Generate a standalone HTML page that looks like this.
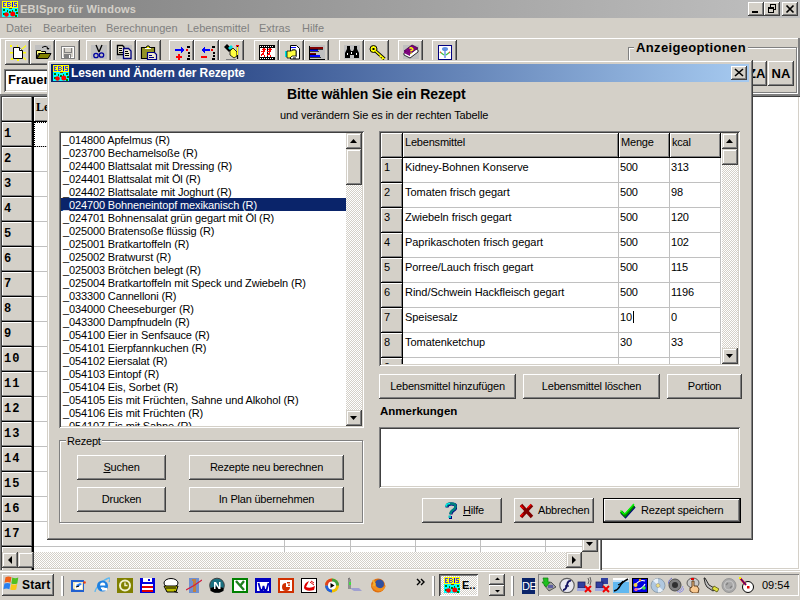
<!DOCTYPE html><html><head><meta charset="utf-8"><style>
*{margin:0;padding:0;box-sizing:border-box}
html,body{width:800px;height:600px;overflow:hidden;background:#D4D0C8;font-family:"Liberation Sans",sans-serif;font-size:11px;color:#000;letter-spacing:-0.2px}
div{position:absolute}
.t{white-space:nowrap;line-height:13px}
.rz{background:#D4D0C8;box-shadow:inset -1px -1px #404040,inset 1px 1px #fff,inset -2px -2px #808080}
.sb{background:#D4D0C8;box-shadow:inset -1px -1px #404040,inset 1px 1px #D4D0C8,inset -2px -2px #808080,inset 2px 2px #fff}
.sk{background:#fff;box-shadow:inset 1px 1px #808080,inset -1px -1px #fff,inset 2px 2px #404040,inset -2px -2px #D4D0C8}
.dt{background:conic-gradient(#fff 25%,#D4D0C8 0 50%,#fff 0 75%,#D4D0C8 0) 0 0/2px 2px}
.hc{background:#D4D0C8;box-shadow:inset -1px -1px #000,inset 1px 1px #fff,inset -2px -2px #808080}
.ct{text-align:center}
.rhc{background:#D4D0C8;box-shadow:inset 0 -1px #000,inset -2px 0 #000,inset -3px -2px #808080,inset 1px 1px #fff}
.mono{font-family:"Liberation Mono",monospace;font-weight:bold;font-size:12px;letter-spacing:1px}
</style></head><body>
<div style="left:0;top:0;width:800px;height:18px;background:linear-gradient(to right,#808080,#C0C0C0)"></div>
<svg style="position:absolute;left:2px;top:1px" width="16" height="16" viewBox="0 0 16 16" ><rect x="0" y="0" width="16" height="16" fill="#00FFFF"/><rect x="0" y="0" width="16" height="7" fill="#FFFF00"/>
<g fill="#4848D8"><rect x="1" y="1" width="1" height="5"/><rect x="1" y="1" width="3" height="1"/><rect x="1" y="3" width="2" height="1"/><rect x="1" y="5" width="3" height="1"/>
<rect x="5" y="1" width="1" height="5"/><rect x="5" y="1" width="3" height="1"/><rect x="5" y="3" width="3" height="1"/><rect x="5" y="5" width="3" height="1"/><rect x="8" y="2" width="1" height="1"/><rect x="8" y="4" width="1" height="1"/>
<rect x="12" y="1" width="3" height="1"/><rect x="12" y="2" width="1" height="1"/><rect x="12" y="3" width="3" height="1"/><rect x="14" y="4" width="1" height="1"/><rect x="12" y="5" width="3" height="1"/></g><rect x="10" y="1" width="1" height="5" fill="#0000FF"/>
<rect x="7" y="7" width="3" height="1" fill="#804000"/>
<g fill="#008000"><rect x="1" y="8" width="2" height="2"/><rect x="5" y="9" width="1" height="2"/><rect x="7" y="10" width="2" height="2"/><rect x="10" y="9" width="1" height="2"/><rect x="13" y="8" width="2" height="2"/><rect x="1" y="12" width="2" height="2"/><rect x="14" y="11" width="2" height="2"/><rect x="13" y="14" width="2" height="2"/></g>
<circle cx="4.5" cy="13.5" r="2.3" fill="#FF0000"/><circle cx="10.8" cy="13" r="2.5" fill="#FF0000"/></svg>
<div class="t" style="left:20px;top:3px;font-weight:bold;color:#D4D0C8;letter-spacing:0.2px">EBISpro für Windows</div>
<div class="rz" style="left:748px;top:2px;width:16px;height:14px"></div>
<div class="rz" style="left:764px;top:2px;width:16px;height:14px"></div>
<div class="rz" style="left:782px;top:2px;width:16px;height:14px"></div>
<div style="left:752px;top:11px;width:6px;height:2px;background:#000"></div>
<svg style="position:absolute;left:764px;top:2px" width="16" height="14" shape-rendering="crispEdges"><path d="M6 2h6v1h-6z M6 3h1v2h-1z M11 3h1v5h-1z M10 7h1v1h-1z M4 5h6v2h-6z M4 7h1v4h-1z M9 7h1v4h-1z M4 10h6v1h-6z" fill="#000"/></svg>
<svg style="position:absolute;left:782px;top:2px" width="16" height="14"><path d="M4.5 3.5l7 7M11.5 3.5l-7 7" stroke="#000" stroke-width="1.7"/></svg>
<div class="t" style="left:6px;top:22px;color:#808080;letter-spacing:0">Datei</div>
<div class="t" style="left:43px;top:22px;color:#808080;letter-spacing:0">Bearbeiten</div>
<div class="t" style="left:106px;top:22px;color:#808080;letter-spacing:0">Berechnungen</div>
<div class="t" style="left:187px;top:22px;color:#808080;letter-spacing:0">Lebensmittel</div>
<div class="t" style="left:259px;top:22px;color:#808080;letter-spacing:0">Extras</div>
<div class="t" style="left:302px;top:22px;color:#808080;letter-spacing:0">Hilfe</div>
<div style="left:0;top:38px;width:800px;height:1px;background:#fff"></div>
<div style="left:0;top:38px;width:1px;height:56px;background:#fff"></div>
<div class="rz" style="left:5px;top:40px;width:25px;height:25px"></div>
<div class="rz" style="left:30px;top:40px;width:25px;height:25px"></div>
<div class="rz" style="left:55px;top:40px;width:25px;height:25px"></div>
<div class="rz" style="left:86px;top:40px;width:25px;height:25px"></div>
<div class="rz" style="left:111px;top:40px;width:25px;height:25px"></div>
<div class="rz" style="left:136px;top:40px;width:25px;height:25px"></div>
<div class="rz" style="left:169px;top:40px;width:25px;height:25px"></div>
<div class="rz" style="left:194px;top:40px;width:25px;height:25px"></div>
<div class="rz" style="left:219px;top:40px;width:25px;height:25px"></div>
<div class="rz" style="left:254px;top:40px;width:25px;height:25px"></div>
<div class="rz" style="left:279px;top:40px;width:25px;height:25px"></div>
<div class="rz" style="left:304px;top:40px;width:25px;height:25px"></div>
<div class="rz" style="left:339px;top:40px;width:25px;height:25px"></div>
<div class="rz" style="left:364px;top:40px;width:25px;height:25px"></div>
<div class="rz" style="left:398px;top:40px;width:25px;height:25px"></div>
<div class="rz" style="left:432px;top:40px;width:25px;height:25px"></div>
<svg style="position:absolute;left:5px;top:40px" width="25" height="25" viewBox="0 0 25 25" ><g fill="#FFFF00"><rect x="5" y="5" width="2" height="2"/><rect x="12" y="5" width="1" height="2"/><path d="M16 9l5-4v1.5l-4 3z"/><rect x="5" y="12" width="3" height="1.5"/><rect x="18" y="12" width="3" height="1.5"/><rect x="6" y="18" width="2" height="2"/><rect x="12" y="19" width="2" height="2"/><path d="M18 18l3 2.5v-1.5l-2-2z"/></g>
<path d="M8.5 7.5h6l3 3v8h-9z" fill="#fff" stroke="#000"/><path d="M14.5 7.5v3h3" fill="#fff" stroke="#000"/></svg>
<svg style="position:absolute;left:30px;top:40px" width="25" height="25" viewBox="0 0 25 25" ><rect x="5" y="5" width="16" height="14" fill="#C0C0C0"/>
<path d="M6.5 10.5h4l1 1h4v2h-7l-2 5z" fill="#FFFF80" stroke="#000"/><path d="M7 18.5l3-5h11l-3 5z" fill="#808000" stroke="#000"/>
<path d="M12 7.5q3-2.5 6 0" fill="none" stroke="#000"/><path d="M16.5 8h3l-1.5 2z" fill="#000"/></svg>
<svg style="position:absolute;left:55px;top:40px" width="25" height="25" viewBox="0 0 25 25" shape-rendering="crispEdges"><path d="M6.5 6.5h13v12h-13z" fill="none" stroke="#808080"/><path d="M7.5 7.5h11v10h-11z" fill="none" stroke="#fff"/>
<path d="M9.5 7.5v5h7v-5" fill="none" stroke="#808080"/><rect x="9" y="14" width="7" height="5" fill="#808080"/><rect x="14" y="15" width="1" height="3" fill="#fff"/></svg>
<svg style="position:absolute;left:86px;top:40px" width="25" height="25" viewBox="0 0 25 25" ><rect x="5" y="5" width="16" height="14" fill="#C0C0C0"/>
<path d="M10 5l3 7M16 5l-3 7" stroke="#000" stroke-width="1.3" fill="none"/>
<circle cx="10" cy="15.5" r="2.2" fill="none" stroke="#0000A0" stroke-width="1.3"/><circle cx="15.5" cy="15" r="2.2" fill="none" stroke="#0000A0" stroke-width="1.3"/></svg>
<svg style="position:absolute;left:111px;top:40px" width="25" height="25" viewBox="0 0 25 25" ><rect x="5" y="5" width="16" height="14" fill="#C0C0C0"/>
<path d="M6.5 5.5h5l1.5 1.5v7.5h-6.5z" fill="#EEE8D0" stroke="#000" stroke-width="1.3"/><path d="M8 8.5h3M8 10.5h3M8 12.5h4" stroke="#000"/>
<path d="M12.5 8.5h5l2.5 2.5v7.5h-7.5z" fill="#EEE8D0" stroke="#000080" stroke-width="1.3"/><path d="M14 11.5h3M14 13.5h4M14 15.5h4" stroke="#000"/></svg>
<svg style="position:absolute;left:136px;top:40px" width="25" height="25" viewBox="0 0 25 25" ><path d="M5.5 7.5h13v11h-13z" fill="#808000" stroke="#000" stroke-width="1.2"/><rect x="6" y="8" width="12" height="10" fill="#A0A040" opacity=".6"/>
<path d="M9.5 8.5l1.5-2.5h2l1.5 2.5z" fill="#FFFF00" stroke="#000"/><rect x="9" y="8" width="6" height="1" fill="#fff"/>
<path d="M11.5 12.5h7l2 2v5h-9z" fill="#EEE8D0" stroke="#000080" stroke-width="1.2"/><path d="M13 15.5h3M13 17.5h5" stroke="#000080"/></svg>
<svg style="position:absolute;left:169px;top:40px" width="25" height="25" viewBox="0 0 25 25" shape-rendering="crispEdges"><path d="M6 10h8" stroke="#0000FF" stroke-width="2"/><path d="M12 7l4 3-4 3z" fill="#0000FF"/><rect x="17" y="9" width="2" height="2" fill="#FF0000"/>
<g fill="#000"><rect x="18" y="6" width="3" height="2"/><rect x="19" y="12" width="2" height="2"/><rect x="19" y="15" width="2" height="2"/><rect x="18" y="18" width="3" height="2"/></g>
<path d="M7 17h6M10 14v6" stroke="#FF0000" stroke-width="2"/></svg>
<svg style="position:absolute;left:194px;top:40px" width="25" height="25" viewBox="0 0 25 25" shape-rendering="crispEdges"><path d="M8 10h8" stroke="#0000FF" stroke-width="2"/><path d="M11 7l-4 3 4 3z" fill="#0000FF"/><rect x="17" y="9" width="2" height="2" fill="#FF0000"/>
<g fill="#000"><rect x="18" y="6" width="3" height="2"/><rect x="19" y="12" width="2" height="2"/><rect x="19" y="15" width="2" height="2"/><rect x="18" y="18" width="3" height="2"/></g>
<path d="M7 17h6" stroke="#FF0000" stroke-width="2"/></svg>
<svg style="position:absolute;left:219px;top:40px" width="25" height="25" viewBox="0 0 25 25" ><path d="M5 7l3-3 5 5-3 3z" fill="#000"/><path d="M9 8l3-3 2 2-3 3z" fill="#00E0E0"/>
<path d="M11 11l3-3 4 4v4l-3 2-4-3z" fill="#FFFF40" stroke="#000" stroke-width=".8"/>
<rect x="17" y="5" width="3" height="1.5" fill="#FF0000"/><path d="M18.5 6v13" stroke="#000" stroke-width="1.3"/><path d="M18.5 7v8" stroke="#FFFF00"/>
<rect x="7" y="19" width="10" height="1" fill="#808080"/></svg>
<svg style="position:absolute;left:254px;top:40px" width="25" height="25" viewBox="0 0 25 25" shape-rendering="crispEdges"><rect x="5" y="5" width="16" height="15" fill="#000"/><rect x="6" y="8" width="7" height="9" fill="#fff"/><rect x="14" y="8" width="7" height="9" fill="#fff"/>
<g fill="#fff"><rect x="6" y="6" width="1" height="1"/><rect x="8" y="6" width="1" height="1"/><rect x="10" y="6" width="1" height="1"/><rect x="12" y="6" width="1" height="1"/><rect x="14" y="6" width="1" height="1"/><rect x="16" y="6" width="1" height="1"/><rect x="18" y="6" width="1" height="1"/>
<rect x="6" y="18" width="1" height="1"/><rect x="8" y="18" width="1" height="1"/><rect x="10" y="18" width="1" height="1"/><rect x="12" y="18" width="1" height="1"/><rect x="14" y="18" width="1" height="1"/><rect x="16" y="18" width="1" height="1"/><rect x="18" y="18" width="1" height="1"/></g>
<g stroke="#FF0000" stroke-width="1.3" fill="none"><circle cx="10" cy="9.5" r=".9" fill="#f00"/><path d="M10 10.5l-1 3 2 3M9 13l-2 3M7 12l2-1 2 1"/><circle cx="16" cy="9.5" r=".9" fill="#f00"/><path d="M16 10.5l-1 3 2 3M15 13l-2 3M13 12l2-1 2 1"/></g></svg>
<svg style="position:absolute;left:279px;top:40px" width="25" height="25" viewBox="0 0 25 25" ><path d="M11.5 5.5h6l3 3v10.5h-9z" fill="#fff" stroke="#000"/><rect x="12" y="7" width="5" height="1" fill="#0000FF"/><path d="M13 10h3M17 12h1M17 14h1M17 16h1M14 18h3" stroke="#000"/>
<rect x="6" y="11" width="2" height="6" fill="#00E0E0"/><path d="M8 11h4l2-1h3v6h-4l-2 2h-3z" fill="#FFFF40" stroke="#000" stroke-width=".8"/></svg>
<svg style="position:absolute;left:304px;top:40px" width="25" height="25" viewBox="0 0 25 25" shape-rendering="crispEdges"><rect x="5" y="5" width="16" height="14" fill="#C0C0C0"/><path d="M5.5 6v13h15" fill="none" stroke="#000"/>
<rect x="6" y="7" width="13" height="2" fill="#800000"/><rect x="6" y="9" width="8" height="2" fill="#0000FF"/><rect x="6" y="13" width="6" height="1.5" fill="#800000"/><rect x="6" y="15" width="10" height="2" fill="#0000FF"/>
<path d="M6 9.5h13M6 11.5h9M6 14.5h6M6 17.5h11" stroke="#000" stroke-width=".7"/></svg>
<svg style="position:absolute;left:339px;top:40px" width="25" height="25" viewBox="0 0 25 25" ><rect x="5" y="5" width="16" height="14" fill="#C0C0C0"/>
<path d="M6 18v-5l2-4v-3h3v3l1 2h2l1-2v-3h3v3l2 4v5h-5v-3h-4v3z" fill="#000"/><g fill="#fff"><rect x="8" y="13" width="1" height="2"/><rect x="17" y="13" width="1" height="2"/><rect x="12" y="12" width="1" height="2"/></g></svg>
<svg style="position:absolute;left:364px;top:40px" width="25" height="25" viewBox="0 0 25 25" ><circle cx="9.5" cy="9" r="3.5" fill="#FFFF00" stroke="#000"/><rect x="8.5" y="8" width="2" height="2" fill="#000"/>
<path d="M11.5 11l9 8" stroke="#000" stroke-width="3.2"/><path d="M11.5 11l9 8" stroke="#FFFF00" stroke-width="1.6"/><path d="M17 16l-1.5 1.5M19 18l-1.5 1.5" stroke="#FFFF00" stroke-width="1.2"/></svg>
<svg style="position:absolute;left:398px;top:40px" width="25" height="25" viewBox="0 0 25 25" ><rect x="5" y="5" width="16" height="14" fill="#C0C0C0"/>
<path d="M6 13l8-6 6 3v2l-8 6-6-3z" fill="#FFFFFF" stroke="#000" stroke-width=".8"/><path d="M6 11l8-6 6 3-8 6z" fill="#800080" stroke="#400040" stroke-width=".8"/><path d="M6 11v2l6 3v-2z" fill="#800080"/>
<path d="M11.5 8.5q1.5-1.5 3 0t-1.5 2v1" fill="none" stroke="#FFFF00" stroke-width="1.3"/><rect x="12.5" y="12.5" width="1.3" height="1.3" fill="#FFFF00"/></svg>
<svg style="position:absolute;left:432px;top:40px" width="25" height="25" viewBox="0 0 25 25" ><rect x="6" y="5" width="14" height="15" fill="#000080"/><rect x="7" y="6" width="12" height="13" fill="#fff"/>
<ellipse cx="13" cy="9" rx="3" ry="2" fill="#6090E0"/><rect x="12" y="11" width="2" height="7" fill="#90B0F0"/><path d="M8 12l4 3M18 12l-4 3" stroke="#40C040" stroke-width="1.2"/><path d="M8 12l1 .7M18 12l-1 .7" stroke="#FF4040" stroke-width="1.3"/></svg>
<div class="sk" style="left:4px;top:69px;width:60px;height:23px"></div>
<div class="t" style="left:8px;top:71.5px;font-weight:bold;font-size:13px;line-height:16px;letter-spacing:0">Frauen</div>
<div style="left:628px;top:47px;width:169px;height:46px;border:1px solid #808080;box-shadow:1px 1px #fff,inset 1px 1px #fff"></div>
<div class="t" style="left:634px;top:40px;padding:0 2px;background:#D4D0C8;font-weight:bold;font-size:13px;line-height:15px;letter-spacing:0.35px">Anzeigeoptionen</div>
<div class="rz" style="left:741px;top:61px;width:26px;height:25px"></div>
<div class="rz" style="left:768px;top:61px;width:26px;height:25px"></div>
<div class="t" style="left:748px;top:66px;font-weight:bold;font-size:13px;line-height:16px;letter-spacing:0">ZA</div>
<div class="t ct" style="left:768px;top:66px;width:26px;font-weight:bold;font-size:13px;line-height:16px;letter-spacing:0">NA</div>
<div style="left:798px;top:38px;width:2px;height:57px;background:#808080"></div>
<div style="left:0;top:94px;width:800px;height:1px;background:#808080"></div>
<div style="left:0;top:95px;width:600px;height:475px;background:#fff;box-shadow:inset 1px 1px #808080,inset 2px 2px #404040,inset -1px -1px #fff,inset -2px -2px #D4D0C8"></div>
<div class="rhc" style="left:2px;top:97px;width:32px;height:25px"></div>
<div class="hc" style="left:34px;top:97px;width:100px;height:25px"></div>
<div class="t" style="left:36px;top:99px;font-family:'Liberation Serif',serif;font-weight:bold;font-size:12px;line-height:16px;letter-spacing:0">Lebensmittel</div>
<div class="rhc" style="left:2px;top:122px;width:32px;height:25px"></div>
<div class="t mono" style="left:4px;top:127px;line-height:15px">1</div>
<div class="rhc" style="left:2px;top:147px;width:32px;height:25px"></div>
<div class="t mono" style="left:4px;top:152px;line-height:15px">2</div>
<div class="rhc" style="left:2px;top:172px;width:32px;height:25px"></div>
<div class="t mono" style="left:4px;top:177px;line-height:15px">3</div>
<div class="rhc" style="left:2px;top:197px;width:32px;height:25px"></div>
<div class="t mono" style="left:4px;top:202px;line-height:15px">4</div>
<div class="rhc" style="left:2px;top:222px;width:32px;height:25px"></div>
<div class="t mono" style="left:4px;top:227px;line-height:15px">5</div>
<div class="rhc" style="left:2px;top:247px;width:32px;height:25px"></div>
<div class="t mono" style="left:4px;top:252px;line-height:15px">6</div>
<div class="rhc" style="left:2px;top:272px;width:32px;height:25px"></div>
<div class="t mono" style="left:4px;top:277px;line-height:15px">7</div>
<div class="rhc" style="left:2px;top:297px;width:32px;height:25px"></div>
<div class="t mono" style="left:4px;top:302px;line-height:15px">8</div>
<div class="rhc" style="left:2px;top:322px;width:32px;height:25px"></div>
<div class="t mono" style="left:4px;top:327px;line-height:15px">9</div>
<div class="rhc" style="left:2px;top:347px;width:32px;height:25px"></div>
<div class="t mono" style="left:4px;top:352px;line-height:15px">10</div>
<div class="rhc" style="left:2px;top:372px;width:32px;height:25px"></div>
<div class="t mono" style="left:4px;top:377px;line-height:15px">11</div>
<div class="rhc" style="left:2px;top:397px;width:32px;height:25px"></div>
<div class="t mono" style="left:4px;top:402px;line-height:15px">12</div>
<div class="rhc" style="left:2px;top:422px;width:32px;height:25px"></div>
<div class="t mono" style="left:4px;top:427px;line-height:15px">13</div>
<div class="rhc" style="left:2px;top:447px;width:32px;height:25px"></div>
<div class="t mono" style="left:4px;top:452px;line-height:15px">14</div>
<div class="rhc" style="left:2px;top:472px;width:32px;height:25px"></div>
<div class="t mono" style="left:4px;top:477px;line-height:15px">15</div>
<div class="rhc" style="left:2px;top:497px;width:32px;height:25px"></div>
<div class="t mono" style="left:4px;top:502px;line-height:15px">16</div>
<div class="rhc" style="left:2px;top:522px;width:32px;height:25px"></div>
<div class="t mono" style="left:4px;top:527px;line-height:15px">17</div>
<div class="rhc" style="left:2px;top:547px;width:32px;height:30px"></div>
<div class="t mono" style="left:4px;top:552px;line-height:15px">18</div>
<div style="left:34px;top:146px;width:548px;height:1px;background:#C0C0C0"></div>
<div style="left:34px;top:171px;width:548px;height:1px;background:#C0C0C0"></div>
<div style="left:34px;top:196px;width:548px;height:1px;background:#C0C0C0"></div>
<div style="left:34px;top:221px;width:548px;height:1px;background:#C0C0C0"></div>
<div style="left:34px;top:246px;width:548px;height:1px;background:#C0C0C0"></div>
<div style="left:34px;top:271px;width:548px;height:1px;background:#C0C0C0"></div>
<div style="left:34px;top:296px;width:548px;height:1px;background:#C0C0C0"></div>
<div style="left:34px;top:321px;width:548px;height:1px;background:#C0C0C0"></div>
<div style="left:34px;top:346px;width:548px;height:1px;background:#C0C0C0"></div>
<div style="left:34px;top:371px;width:548px;height:1px;background:#C0C0C0"></div>
<div style="left:34px;top:396px;width:548px;height:1px;background:#C0C0C0"></div>
<div style="left:34px;top:421px;width:548px;height:1px;background:#C0C0C0"></div>
<div style="left:34px;top:446px;width:548px;height:1px;background:#C0C0C0"></div>
<div style="left:34px;top:471px;width:548px;height:1px;background:#C0C0C0"></div>
<div style="left:34px;top:496px;width:548px;height:1px;background:#C0C0C0"></div>
<div style="left:34px;top:521px;width:548px;height:1px;background:#C0C0C0"></div>
<div style="left:34px;top:546px;width:548px;height:1px;background:#C0C0C0"></div>
<div style="left:284px;top:122px;width:1px;height:430px;background:#C0C0C0"></div>
<div style="left:350px;top:122px;width:1px;height:430px;background:#C0C0C0"></div>
<div style="left:415px;top:122px;width:1px;height:430px;background:#C0C0C0"></div>
<div style="left:480px;top:122px;width:1px;height:430px;background:#C0C0C0"></div>
<div style="left:545px;top:122px;width:1px;height:430px;background:#C0C0C0"></div>
<div style="left:34px;top:122px;width:100px;height:25px;border:1px dotted #000"></div>
<div class="dt" style="left:582px;top:96px;width:16px;height:456px"></div>
<div class="sb" style="left:582px;top:536px;width:16px;height:16px"></div>
<svg style="position:absolute;left:582px;top:536px" width="16" height="16"><path d="M4 6h7l-3.5 4z" fill="#000"/></svg>
<div class="dt" style="left:2px;top:552px;width:580px;height:16px"></div>
<div class="sb" style="left:2px;top:552px;width:16px;height:16px"></div>
<svg style="position:absolute;left:2px;top:552px" width="16" height="16"><path d="M6 8l4-4v8z" fill="#000"/></svg>
<div class="sb" style="left:18px;top:552px;width:16px;height:16px"></div>
<div class="sb" style="left:566px;top:552px;width:16px;height:16px"></div>
<svg style="position:absolute;left:566px;top:552px" width="16" height="16"><path d="M10 8l-4-4v8z" fill="#000"/></svg>
<div style="left:582px;top:552px;width:16px;height:16px;background:#D4D0C8"></div>
<div style="left:600px;top:95px;width:200px;height:475px;background:#fff;box-shadow:inset 1px 1px #808080,inset 2px 2px #404040,inset -1px -1px #fff,inset -2px -2px #D4D0C8"></div><div style="left:47px;top:60px;width:706px;height:480px;background:#D4D0C8;box-shadow:inset -1px -1px #404040,inset 1px 1px #D4D0C8,inset -2px -2px #808080,inset 2px 2px #fff"></div>
<div style="left:51px;top:64px;width:698px;height:18px;background:linear-gradient(to right,#0A246A,#A6CAF0)"></div>
<svg style="position:absolute;left:53px;top:65px" width="16" height="16" viewBox="0 0 16 16" ><rect x="0" y="0" width="16" height="16" fill="#00FFFF"/><rect x="0" y="0" width="16" height="7" fill="#FFFF00"/>
<g fill="#4848D8"><rect x="1" y="1" width="1" height="5"/><rect x="1" y="1" width="3" height="1"/><rect x="1" y="3" width="2" height="1"/><rect x="1" y="5" width="3" height="1"/>
<rect x="5" y="1" width="1" height="5"/><rect x="5" y="1" width="3" height="1"/><rect x="5" y="3" width="3" height="1"/><rect x="5" y="5" width="3" height="1"/><rect x="8" y="2" width="1" height="1"/><rect x="8" y="4" width="1" height="1"/>
<rect x="12" y="1" width="3" height="1"/><rect x="12" y="2" width="1" height="1"/><rect x="12" y="3" width="3" height="1"/><rect x="14" y="4" width="1" height="1"/><rect x="12" y="5" width="3" height="1"/></g><rect x="10" y="1" width="1" height="5" fill="#0000FF"/>
<rect x="7" y="7" width="3" height="1" fill="#804000"/>
<g fill="#008000"><rect x="1" y="8" width="2" height="2"/><rect x="5" y="9" width="1" height="2"/><rect x="7" y="10" width="2" height="2"/><rect x="10" y="9" width="1" height="2"/><rect x="13" y="8" width="2" height="2"/><rect x="1" y="12" width="2" height="2"/><rect x="14" y="11" width="2" height="2"/><rect x="13" y="14" width="2" height="2"/></g>
<circle cx="4.5" cy="13.5" r="2.3" fill="#FF0000"/><circle cx="10.8" cy="13" r="2.5" fill="#FF0000"/></svg>
<div class="t" style="left:71px;top:66px;font-weight:bold;color:#fff;font-size:12px;line-height:15px;letter-spacing:-0.1px">Lesen und Ändern der Rezepte</div>
<div class="rz" style="left:731px;top:66px;width:16px;height:14px"></div>
<svg style="position:absolute;left:731px;top:66px" width="16" height="14"><path d="M4 3l8 7M12 3l-8 7" stroke="#000" stroke-width="1.6"/></svg>
<div class="t" style="left:287px;top:86px;font-weight:bold;font-size:14px;line-height:17px;letter-spacing:-0.1px">Bitte wählen Sie ein Rezept</div>
<div class="t" style="left:280px;top:109px;letter-spacing:-0.1px">und verändern Sie es in der rechten Tabelle</div>
<div class="sk" style="left:59px;top:131px;width:305px;height:297px"></div>
<div style="left:61px;top:133px;width:285px;height:293px;overflow:hidden;letter-spacing:-0.13px">
<div class="t" style="left:0;top:0px;width:285px;height:13px;padding-left:2px;"><span style="position:relative;top:1px">_014800 Apfelmus (R)</span></div>
<div class="t" style="left:0;top:13px;width:285px;height:13px;padding-left:2px;"><span style="position:relative;top:1px">_023700 Bechamelsoße (R)</span></div>
<div class="t" style="left:0;top:26px;width:285px;height:13px;padding-left:2px;"><span style="position:relative;top:1px">_024400 Blattsalat mit Dressing (R)</span></div>
<div class="t" style="left:0;top:39px;width:285px;height:13px;padding-left:2px;"><span style="position:relative;top:1px">_024401 Blattsalat mit Öl (R)</span></div>
<div class="t" style="left:0;top:52px;width:285px;height:13px;padding-left:2px;"><span style="position:relative;top:1px">_024402 Blattsalate mit Joghurt (R)</span></div>
<div class="t" style="left:0;top:65px;width:285px;height:13px;padding-left:2px;background:#0A246A;color:#fff;"><span style="position:relative;top:1px">_024700 Bohneneintopf mexikanisch (R)</span></div>
<div class="t" style="left:0;top:78px;width:285px;height:13px;padding-left:2px;"><span style="position:relative;top:1px">_024701 Bohnensalat grün gegart mit Öl (R)</span></div>
<div class="t" style="left:0;top:91px;width:285px;height:13px;padding-left:2px;"><span style="position:relative;top:1px">_025000 Bratensoße flüssig (R)</span></div>
<div class="t" style="left:0;top:104px;width:285px;height:13px;padding-left:2px;"><span style="position:relative;top:1px">_025001 Bratkartoffeln (R)</span></div>
<div class="t" style="left:0;top:117px;width:285px;height:13px;padding-left:2px;"><span style="position:relative;top:1px">_025002 Bratwurst (R)</span></div>
<div class="t" style="left:0;top:130px;width:285px;height:13px;padding-left:2px;"><span style="position:relative;top:1px">_025003 Brötchen belegt (R)</span></div>
<div class="t" style="left:0;top:143px;width:285px;height:13px;padding-left:2px;"><span style="position:relative;top:1px">_025004 Bratkartoffeln mit Speck und Zwiebeln (R)</span></div>
<div class="t" style="left:0;top:156px;width:285px;height:13px;padding-left:2px;"><span style="position:relative;top:1px">_033300 Cannelloni (R)</span></div>
<div class="t" style="left:0;top:169px;width:285px;height:13px;padding-left:2px;"><span style="position:relative;top:1px">_034000 Cheeseburger (R)</span></div>
<div class="t" style="left:0;top:182px;width:285px;height:13px;padding-left:2px;"><span style="position:relative;top:1px">_043300 Dampfnudeln (R)</span></div>
<div class="t" style="left:0;top:195px;width:285px;height:13px;padding-left:2px;"><span style="position:relative;top:1px">_054100 Eier in Senfsauce (R)</span></div>
<div class="t" style="left:0;top:208px;width:285px;height:13px;padding-left:2px;"><span style="position:relative;top:1px">_054101 Eierpfannkuchen (R)</span></div>
<div class="t" style="left:0;top:221px;width:285px;height:13px;padding-left:2px;"><span style="position:relative;top:1px">_054102 Eiersalat (R)</span></div>
<div class="t" style="left:0;top:234px;width:285px;height:13px;padding-left:2px;"><span style="position:relative;top:1px">_054103 Eintopf (R)</span></div>
<div class="t" style="left:0;top:247px;width:285px;height:13px;padding-left:2px;"><span style="position:relative;top:1px">_054104 Eis, Sorbet (R)</span></div>
<div class="t" style="left:0;top:260px;width:285px;height:13px;padding-left:2px;"><span style="position:relative;top:1px">_054105 Eis mit Früchten, Sahne und Alkohol (R)</span></div>
<div class="t" style="left:0;top:273px;width:285px;height:13px;padding-left:2px;"><span style="position:relative;top:1px">_054106 Eis mit Früchten (R)</span></div>
<div class="t" style="left:0;top:286px;width:285px;height:13px;padding-left:2px;"><span style="position:relative;top:1px">_054107 Eis mit Sahne (R)</span></div>
</div>
<div class="dt" style="left:346px;top:149px;width:16px;height:261px"></div>
<div class="sb" style="left:346px;top:133px;width:16px;height:16px"></div>
<svg style="position:absolute;left:346px;top:133px" width="16" height="16"><path d="M4 10h7l-3.5-4z" fill="#000"/></svg>
<div class="sb" style="left:346px;top:149px;width:16px;height:36px"></div>
<div class="sb" style="left:346px;top:410px;width:16px;height:16px"></div>
<svg style="position:absolute;left:346px;top:410px" width="16" height="16"><path d="M4 6h7l-3.5 4z" fill="#000"/></svg>
<div class="sk" style="left:379px;top:131px;width:361px;height:235px"></div>
<div style="left:381px;top:133px;width:341px;height:231px;overflow:hidden;background:#fff">
<div class="hc" style="left:0;top:0;width:22px;height:25px"></div>
<div class="hc" style="left:22px;top:0;width:216px;height:25px"></div>
<div class="hc" style="left:238px;top:0;width:51px;height:25px"></div>
<div class="hc" style="left:289px;top:0;width:51px;height:25px"></div>
<div class="t" style="left:24px;top:3px">Lebensmittel</div>
<div class="t" style="left:240px;top:3px">Menge</div>
<div class="t" style="left:291px;top:3px">kcal</div>
<div class="hc" style="left:0;top:25px;width:22px;height:25px"></div>
<div class="t" style="left:3px;top:28px">1</div>
<div style="left:22px;top:49px;width:318px;height:1px;background:#C0C0C0"></div>
<div class="t" style="left:24px;top:28px;letter-spacing:-0.05px">Kidney-Bohnen Konserve</div>
<div class="t" style="left:239px;top:28px">500</div>
<div class="t" style="left:290px;top:28px">313</div>
<div class="hc" style="left:0;top:50px;width:22px;height:25px"></div>
<div class="t" style="left:3px;top:53px">2</div>
<div style="left:22px;top:74px;width:318px;height:1px;background:#C0C0C0"></div>
<div class="t" style="left:24px;top:53px;letter-spacing:-0.05px">Tomaten frisch gegart</div>
<div class="t" style="left:239px;top:53px">500</div>
<div class="t" style="left:290px;top:53px">98</div>
<div class="hc" style="left:0;top:75px;width:22px;height:25px"></div>
<div class="t" style="left:3px;top:78px">3</div>
<div style="left:22px;top:99px;width:318px;height:1px;background:#C0C0C0"></div>
<div class="t" style="left:24px;top:78px;letter-spacing:-0.05px">Zwiebeln frisch gegart</div>
<div class="t" style="left:239px;top:78px">500</div>
<div class="t" style="left:290px;top:78px">120</div>
<div class="hc" style="left:0;top:100px;width:22px;height:25px"></div>
<div class="t" style="left:3px;top:103px">4</div>
<div style="left:22px;top:124px;width:318px;height:1px;background:#C0C0C0"></div>
<div class="t" style="left:24px;top:103px;letter-spacing:-0.05px">Paprikaschoten frisch gegart</div>
<div class="t" style="left:239px;top:103px">500</div>
<div class="t" style="left:290px;top:103px">102</div>
<div class="hc" style="left:0;top:125px;width:22px;height:25px"></div>
<div class="t" style="left:3px;top:128px">5</div>
<div style="left:22px;top:149px;width:318px;height:1px;background:#C0C0C0"></div>
<div class="t" style="left:24px;top:128px;letter-spacing:-0.05px">Porree/Lauch frisch gegart</div>
<div class="t" style="left:239px;top:128px">500</div>
<div class="t" style="left:290px;top:128px">115</div>
<div class="hc" style="left:0;top:150px;width:22px;height:25px"></div>
<div class="t" style="left:3px;top:153px">6</div>
<div style="left:22px;top:174px;width:318px;height:1px;background:#C0C0C0"></div>
<div class="t" style="left:24px;top:153px;letter-spacing:-0.05px">Rind/Schwein Hackfleisch gegart</div>
<div class="t" style="left:239px;top:153px">500</div>
<div class="t" style="left:290px;top:153px">1196</div>
<div class="hc" style="left:0;top:175px;width:22px;height:25px"></div>
<div class="t" style="left:3px;top:178px">7</div>
<div style="left:22px;top:199px;width:318px;height:1px;background:#C0C0C0"></div>
<div class="t" style="left:24px;top:178px;letter-spacing:-0.05px">Speisesalz</div>
<div class="t" style="left:239px;top:178px">10</div>
<div class="t" style="left:290px;top:178px">0</div>
<div class="hc" style="left:0;top:200px;width:22px;height:25px"></div>
<div class="t" style="left:3px;top:203px">8</div>
<div style="left:22px;top:224px;width:318px;height:1px;background:#C0C0C0"></div>
<div class="t" style="left:24px;top:203px;letter-spacing:-0.05px">Tomatenketchup</div>
<div class="t" style="left:239px;top:203px">30</div>
<div class="t" style="left:290px;top:203px">33</div>
<div class="hc" style="left:0;top:225px;width:22px;height:25px"></div>
<div class="t" style="left:3px;top:228px">9</div>
<div style="left:22px;top:249px;width:318px;height:1px;background:#C0C0C0"></div>
<div class="t" style="left:24px;top:228px;letter-spacing:-0.05px"></div>
<div class="t" style="left:239px;top:228px"></div>
<div class="t" style="left:290px;top:228px"></div>
<div style="left:237px;top:25px;width:1px;height:210px;background:#C0C0C0"></div>
<div style="left:288px;top:25px;width:1px;height:210px;background:#C0C0C0"></div>
<div style="left:339px;top:25px;width:1px;height:210px;background:#C0C0C0"></div>
<div style="left:252px;top:178px;width:1px;height:12px;background:#000"></div>
</div>
<div class="dt" style="left:722px;top:149px;width:16px;height:199px"></div>
<div class="sb" style="left:722px;top:133px;width:16px;height:16px"></div>
<svg style="position:absolute;left:722px;top:133px" width="16" height="16"><path d="M4 10h7l-3.5-4z" fill="#000"/></svg>
<div class="sb" style="left:722px;top:149px;width:16px;height:16px"></div>
<div class="sb" style="left:722px;top:348px;width:16px;height:16px"></div>
<svg style="position:absolute;left:722px;top:348px" width="16" height="16"><path d="M4 6h7l-3.5 4z" fill="#000"/></svg>
<div class="rz" style="left:379px;top:374px;width:137px;height:25px"></div>
<div class="t ct" style="left:379px;top:380px;width:137px">Lebensmittel hinzufügen</div>
<div class="rz" style="left:523px;top:374px;width:137px;height:25px"></div>
<div class="t ct" style="left:523px;top:380px;width:137px">Lebensmittel löschen</div>
<div class="rz" style="left:667px;top:374px;width:75px;height:25px"></div>
<div class="t ct" style="left:667px;top:380px;width:75px">Portion</div>
<div class="t" style="left:380px;top:405px;font-weight:bold;font-size:11.5px;letter-spacing:0">Anmerkungen</div>
<div class="sk" style="left:379px;top:427px;width:361px;height:61px"></div>
<div style="left:59px;top:440px;width:304px;height:83px;border:1px solid #808080;box-shadow:1px 1px #fff,inset 1px 1px #fff"></div>
<div class="t" style="left:66px;top:435px;padding:0 1px;background:#D4D0C8">Rezept</div>
<div class="rz" style="left:77px;top:455px;width:89px;height:25px"></div>
<div class="t ct" style="left:77px;top:461px;width:89px"><u>S</u>uchen</div>
<div class="rz" style="left:77px;top:487px;width:89px;height:25px"></div>
<div class="t ct" style="left:77px;top:493px;width:89px">Drucken</div>
<div class="rz" style="left:189px;top:455px;width:155px;height:25px"></div>
<div class="t ct" style="left:189px;top:461px;width:155px">Rezepte neu berechnen</div>
<div class="rz" style="left:189px;top:487px;width:155px;height:25px"></div>
<div class="t ct" style="left:189px;top:493px;width:155px">In Plan übernehmen</div>
<div class="rz" style="left:422px;top:498px;width:80px;height:25px"></div>
<svg style="position:absolute;left:444px;top:502px" width="13" height="18" viewBox="0 0 13 18" ><path d="M3 5.5q0-3.5 4.5-3.5t4.5 3q0 2-2.5 3.5t-2.5 4" fill="none" stroke="#000080" stroke-width="3"/><path d="M2.5 5q0-3.5 4.5-3.5t4.5 3q0 2-2.5 3.5t-2.5 4" fill="none" stroke="#008080" stroke-width="2.6"/><path d="M2 4.5q0-3 4-3" fill="none" stroke="#00FFFF" stroke-width="1.2"/><rect x="5" y="14" width="3" height="3" fill="#000080"/><rect x="4.5" y="13.5" width="2.5" height="2.5" fill="#00C0C0"/></svg>
<div class="t" style="left:463px;top:504px"><u>H</u>ilfe</div>
<div class="rz" style="left:514px;top:498px;width:80px;height:25px"></div>
<svg style="position:absolute;left:519px;top:503px" width="15" height="16" viewBox="0 0 15 16" ><path d="M2 2l11 12M13 2L2 14" stroke="#800000" stroke-width="3.4"/><path d="M1.5 2.5l3 3M12 1.5l-3.5 3.5M1.3 13.5l3-3" stroke="#FF0000" stroke-width="1.2"/></svg>
<div class="t" style="left:538px;top:504px">Abbrechen</div>
<div style="left:603px;top:498px;width:138px;height:25px;background:#000"></div>
<div class="rz" style="left:604px;top:499px;width:136px;height:23px"></div>
<svg style="position:absolute;left:619px;top:502px" width="18" height="17" viewBox="0 0 18 17" ><path d="M2.5 10.5l4 4 9-10" fill="none" stroke="#000080" stroke-width="3"/><path d="M2 9.5l4 4 9-10" fill="none" stroke="#008000" stroke-width="3"/><path d="M1.5 8.5l4 4M6 12l9-10" fill="none" stroke="#00FF00" stroke-width="1.3"/></svg>
<div class="t" style="left:641px;top:504px">Rezept speichern</div><div style="left:0;top:570px;width:800px;height:30px;background:#D4D0C8;box-shadow:inset 0 1px #D4D0C8,inset 0 2px #fff"></div>
<div class="rz" style="left:2px;top:574px;width:52px;height:22px"></div>
<div class="t" style="left:22px;top:579px;font-weight:bold;font-size:12px;letter-spacing:0.2px">Start</div>
<svg style="position:absolute;left:3px;top:576px" width="17" height="16" viewBox="0 0 17 16" ><path d="M2.5 1.2q3-1.4 6 0l-1 5.6q-3-1.4-6 0z" fill="#F06018"/><path d="M9.3 1.6q3 1.4 6 0l-1 5.8q-3 1.4-6 0z" fill="#50C020"/><path d="M1.4 7.6q3-1.4 6 0l-1 5.6q-3-1.4-6 0z" fill="#2880F0"/><path d="M8.2 8q3 1.4 6 0l-1 5.4q-3 1.4-6 0z" fill="#F8C818"/></svg>
<svg style="position:absolute;left:70px;top:577px" width="16" height="16" viewBox="0 0 16 16" ><path d="M1 3h13v12H1z" fill="#2060D0"/><path d="M3 5h10v8H3z" fill="#F0E8C0"/><path d="M5 6h7v6H5z" fill="#fff"/><path d="M6 8l4-2 2 1-4 3z" fill="#3080F0"/><path d="M6 10l3-1" stroke="#000" stroke-width="1.2"/><path d="M3 12q2 2 6 2" stroke="#2060D0" fill="none"/><circle cx="14.5" cy="5.5" r="1.3" fill="#F04010"/></svg>
<svg style="position:absolute;left:94px;top:577px" width="16" height="16" viewBox="0 0 16 16" ><path d="M1 15q0-3 5-8t9-6q2 0 0 4" stroke="#60B8F0" stroke-width="1.3" fill="none"/><circle cx="8.5" cy="9" r="5.5" fill="#1E80E0"/><circle cx="8.7" cy="8.2" r="2.6" fill="#fff"/><rect x="5.5" y="8.5" width="6.5" height="1.6" fill="#1E80E0"/><path d="M8 11h5v2.5H8z" fill="#fff"/><path d="M7 11.5h6" stroke="#fff" stroke-width="1.2"/></svg>
<svg style="position:absolute;left:117px;top:577px" width="16" height="16" viewBox="0 0 16 16" ><rect x="0" y="1" width="16" height="15" fill="#808000"/><circle cx="8" cy="8.5" r="5" fill="none" stroke="#F0F0D0" stroke-width="2"/><path d="M8 5.5v3h2.5" stroke="#F0F0D0" stroke-width="1.5" fill="none"/></svg>
<svg style="position:absolute;left:140px;top:577px" width="16" height="16" viewBox="0 0 16 16" ><rect x="0" y="1" width="15" height="15" fill="#0000E0"/><rect x="3" y="1" width="9" height="4" fill="#fff"/><rect x="8" y="2" width="2" height="2" fill="#0000E0"/><rect x="2" y="7" width="11" height="8" fill="#fff"/><rect x="2" y="9" width="11" height="2" fill="#E00000"/><rect x="2" y="13" width="11" height="2" fill="#E00000"/></svg>
<svg style="position:absolute;left:163px;top:577px" width="16" height="16" viewBox="0 0 16 16" ><ellipse cx="8" cy="6" rx="7" ry="4.5" fill="#fff" stroke="#000"/><path d="M1 9l3 6h9l2-6z" fill="#C0C000" stroke="#000"/><path d="M3 11h10" stroke="#000"/><path d="M11 14l4 2" stroke="#000"/></svg>
<svg style="position:absolute;left:186px;top:577px" width="16" height="16" viewBox="0 0 16 16" ><rect x="3" y="1" width="10" height="15" fill="#7090D0"/><rect x="7" y="2" width="3" height="13" fill="#C08040"/><rect x="6" y="2" width="3" height="2" fill="#C08040"/><path d="M0 13q8-4 16-10" stroke="#D02040" stroke-width="1.3" fill="none"/></svg>
<svg style="position:absolute;left:209px;top:577px" width="16" height="16" viewBox="0 0 16 16" ><circle cx="8" cy="8.5" r="7.3" fill="#1A7080" stroke="#404040"/><path d="M1.5 11q6.5-3 13 0v3q-6.5 3-13 0z" fill="#000"/><path d="M5 12V5h2l3 5V5h1.5v7h-2l-3-5v5z" fill="#fff"/></svg>
<svg style="position:absolute;left:232px;top:577px" width="16" height="16" viewBox="0 0 16 16" ><rect x="0" y="1" width="16" height="15" fill="#008000"/><rect x="2" y="3" width="12" height="11" fill="#fff"/><path d="M4 4l8 9M12 4l-4 5" stroke="#208020" stroke-width="2.4"/></svg>
<svg style="position:absolute;left:255px;top:577px" width="16" height="16" viewBox="0 0 16 16" ><rect x="0" y="1" width="16" height="15" fill="#0000C0"/><rect x="2" y="3" width="12" height="11" fill="#fff"/><rect x="2" y="3" width="12" height="2" fill="#0000C0"/><path d="M3.5 6l2 7h2l1-4 1 4h2l2-7" stroke="#0000C0" stroke-width="1.8" fill="none"/></svg>
<svg style="position:absolute;left:278px;top:577px" width="16" height="16" viewBox="0 0 16 16" ><rect x="0" y="1" width="16" height="15" fill="#D03000"/><rect x="2" y="3" width="12" height="11" fill="#fff"/><path d="M8 6a4 4 0 1 0 4 4h-4z" fill="#D03000"/><rect x="9" y="5" width="3" height="1.5" fill="#D03000"/><rect x="10" y="7.5" width="2" height="1.3" fill="#D03000"/></svg>
<svg style="position:absolute;left:301px;top:577px" width="16" height="16" viewBox="0 0 16 16" ><rect x="0" y="1" width="16" height="15" fill="#000"/><rect x="1" y="2" width="14" height="13" fill="#fff"/><path d="M3 11q2 4 10 2l1-4q-5 3-9 1l3-6q-5 2-5 7z" fill="#E00000"/><path d="M9 5l4 3M10 4l3 2" stroke="#E00000"/></svg>
<svg style="position:absolute;left:324px;top:577px" width="16" height="16" viewBox="0 0 16 16" ><circle cx="8" cy="8.5" r="7" fill="#F0C000"/><path d="M8 1.5a7 7 0 0 0-7 7h7z" fill="#E04020"/><path d="M8 1.5a7 7 0 0 1 7 7h-7z" fill="#40A040"/><path d="M1 8.5a7 7 0 0 0 7 7v-7z" fill="#2060E0"/><circle cx="8" cy="8.5" r="4" fill="#fff"/><path d="M6.5 6v5l4-2.5z" fill="#000"/></svg>
<svg style="position:absolute;left:347px;top:577px" width="16" height="16" viewBox="0 0 16 16" ><rect x="1" y="2" width="3" height="10" fill="#909090"/><rect x="2" y="5" width="2" height="3" fill="#40E040"/><path d="M4 12l3 2h8l-3-3H4z" fill="#A0A0D0"/><path d="M1 2l2-1" stroke="#606060"/></svg>
<svg style="position:absolute;left:370px;top:577px" width="16" height="16" viewBox="0 0 16 16" ><circle cx="8" cy="8.5" r="7" fill="#E07010"/><circle cx="9.5" cy="7" r="4.5" fill="#3050A0"/><path d="M1 8q3 7 10 6q4-1 5-6q-3 4-7 3q-4-1-3-5z" fill="#F09020"/><path d="M3 3q2 3 1 6" stroke="#F0B030" stroke-width="2" fill="none"/></svg>
<svg style="position:absolute;left:541px;top:577px" width="16" height="16" viewBox="0 0 16 16" ><path d="M3 8l7-3 5 5-7 4z" fill="#A0A0A0" stroke="#404040" stroke-width=".8"/><rect x="7" y="8" width="5" height="3" fill="#6060A0"/><path d="M2 1l5 0 0 4 2 0-4 5-4-5 2 0z" fill="#20C020" stroke="#108010" stroke-width=".7"/></svg>
<svg style="position:absolute;left:559px;top:577px" width="16" height="16" viewBox="0 0 16 16" ><circle cx="8" cy="8.5" r="7.2" fill="#E8E8F0" stroke="#606060" stroke-width="1.2"/><path d="M4 13q3 0 4-5t4-4" stroke="#101060" stroke-width="1.8" fill="none"/><path d="M6 9h4" stroke="#101060" stroke-width="1.3"/></svg>
<svg style="position:absolute;left:577px;top:577px" width="16" height="16" viewBox="0 0 16 16" ><rect x="1" y="5" width="7" height="6" fill="#3040A0" stroke="#202060" stroke-width=".8"/><rect x="0" y="11" width="9" height="3" fill="#A0A8E0"/><path d="M11 1q2 3 0 6M13 0q2 4 0 8" stroke="#606060" fill="none"/><path d="M8 9l6 6M14 9l-6 6" stroke="#F00000" stroke-width="2"/></svg>
<svg style="position:absolute;left:595px;top:577px" width="16" height="16" viewBox="0 0 16 16" ><rect x="6" y="1" width="7" height="6" fill="#3040A0"/><rect x="1" y="5" width="7" height="6" fill="#3040A0" stroke="#202060" stroke-width=".8"/><rect x="0" y="11" width="9" height="3" fill="#A0A8E0"/><path d="M8 9l6 6M14 9l-6 6" stroke="#F00000" stroke-width="2"/></svg>
<svg style="position:absolute;left:613px;top:577px" width="16" height="16" viewBox="0 0 16 16" ><rect x="0" y="1" width="16" height="15" fill="#fff"/><rect x="0" y="5" width="16" height="11" fill="#60B8F0"/><rect x="0" y="3" width="16" height="2" fill="#C0E0F8"/><path d="M1 14q4-1 6-5t8-7" stroke="#000" stroke-width="1.6" fill="none"/><path d="M5 8q3-1 5-4" stroke="#000" stroke-width="1.2" fill="none"/></svg>
<svg style="position:absolute;left:632px;top:577px" width="16" height="16" viewBox="0 0 16 16" ><rect x="0" y="1" width="16" height="15" fill="#000"/><rect x="1" y="2" width="14" height="13" fill="#0000E0"/><path d="M3 8q5-6 10-4M4 12q6 1 9-5" stroke="#fff" stroke-width="1.2" fill="none"/><circle cx="3.5" cy="8" r="2" fill="#F0D040"/><circle cx="4" cy="12.5" r="1.8" fill="#F060A0"/><circle cx="12" cy="11" r="1.8" fill="#40E040"/><circle cx="8" cy="3" r="1.2" fill="#F0A000"/></svg>
<svg style="position:absolute;left:650px;top:577px" width="16" height="16" viewBox="0 0 16 16" ><circle cx="8" cy="8.5" r="7" fill="#B0C8E0" stroke="#8090A0" stroke-width=".8"/><path d="M8 8.5L3 3.5A7 7 0 0 1 8 1.5zM8 8.5l5 5A7 7 0 0 1 8 15.5z" fill="#E8F0F8"/><circle cx="8" cy="8.5" r="2" fill="#F0E080" stroke="#909090" stroke-width=".6"/></svg>
<svg style="position:absolute;left:668px;top:577px" width="16" height="16" viewBox="0 0 16 16" ><circle cx="7" cy="8" r="6" fill="#808080" stroke="#505050"/><circle cx="7" cy="8" r="3" fill="#303030"/><path d="M9 15q5-1 6-6M11 16q5-2 5-5" stroke="#9090E0" fill="none"/><path d="M0 7q1-5 4-6" stroke="#7070C0" fill="none"/></svg>
<svg style="position:absolute;left:686px;top:577px" width="16" height="16" viewBox="0 0 16 16" ><ellipse cx="7" cy="6" rx="6" ry="5" fill="#C8C8C8" stroke="#404040" stroke-width=".8"/><rect x="5" y="1" width="3" height="2" fill="#E00000"/><path d="M6 4v6l-2 1v3l3 2h5l1-4-2-3h-3V4z" fill="#F8C890" stroke="#402000" stroke-width=".8"/></svg>
<svg style="position:absolute;left:703px;top:577px" width="16" height="16" viewBox="0 0 16 16" ><path d="M1 1q1 7 3 9l6 4 3-2-7-4-4-7z" fill="#C0C0C0" stroke="#000" stroke-width=".8"/><path d="M9 12l5 3 2-3-5-3z" fill="#E0E040" stroke="#404000" stroke-width=".7"/></svg>
<svg style="position:absolute;left:721px;top:577px" width="16" height="16" viewBox="0 0 16 16" ><circle cx="8" cy="8.5" r="7" fill="#A8A8A8" stroke="#989898"/><circle cx="8" cy="8.5" r="4.5" fill="none" stroke="#C8C8C8" stroke-width="1.2"/><path d="M5 8l2-2M11 9l-2 2" stroke="#808080" stroke-width="1.3"/></svg>
<svg style="position:absolute;left:739px;top:577px" width="16" height="16" viewBox="0 0 16 16" ><circle cx="9" cy="10" r="5.5" fill="#fff" stroke="#000"/><rect x="8" y="9" width="2.5" height="2.5" fill="#E00000"/><path d="M1 1l6 7" stroke="#E00000" stroke-width="2"/><path d="M2 2l5 6" stroke="#0000C0" stroke-width=".9"/><rect x="0" y="0" width="2" height="2" fill="#F0F000"/></svg>
<div style="left:61px;top:576px;width:2px;height:20px;background:#fff"></div>
<div style="left:63px;top:576px;width:1px;height:20px;background:#808080"></div>
<svg style="position:absolute;left:416px;top:578px" width="12" height="8" viewBox="0 0 12 8" ><path d="M1 1l3 3-3 3M5 1l3 3-3 3" stroke="#000" stroke-width="1.4" fill="none"/></svg>
<div style="left:432px;top:576px;width:2px;height:20px;background:#fff"></div>
<div style="left:434px;top:576px;width:1px;height:20px;background:#808080"></div>
<div class="dt" style="left:439px;top:574px;width:39px;height:22px;box-shadow:inset 1px 1px #404040,inset -1px -1px #fff,inset 2px 2px #808080"></div>
<div class="t" style="left:462px;top:579px;font-weight:bold;letter-spacing:0">E..</div>
<svg style="position:absolute;left:444px;top:577px" width="16" height="16" viewBox="0 0 16 16" ><rect x="0" y="0" width="16" height="16" fill="#00FFFF"/><rect x="0" y="0" width="16" height="7" fill="#FFFF00"/>
<g fill="#4848D8"><rect x="1" y="1" width="1" height="5"/><rect x="1" y="1" width="3" height="1"/><rect x="1" y="3" width="2" height="1"/><rect x="1" y="5" width="3" height="1"/>
<rect x="5" y="1" width="1" height="5"/><rect x="5" y="1" width="3" height="1"/><rect x="5" y="3" width="3" height="1"/><rect x="5" y="5" width="3" height="1"/><rect x="8" y="2" width="1" height="1"/><rect x="8" y="4" width="1" height="1"/>
<rect x="12" y="1" width="3" height="1"/><rect x="12" y="2" width="1" height="1"/><rect x="12" y="3" width="3" height="1"/><rect x="14" y="4" width="1" height="1"/><rect x="12" y="5" width="3" height="1"/></g><rect x="10" y="1" width="1" height="5" fill="#0000FF"/>
<rect x="7" y="7" width="3" height="1" fill="#804000"/>
<g fill="#008000"><rect x="1" y="8" width="2" height="2"/><rect x="5" y="9" width="1" height="2"/><rect x="7" y="10" width="2" height="2"/><rect x="10" y="9" width="1" height="2"/><rect x="13" y="8" width="2" height="2"/><rect x="1" y="12" width="2" height="2"/><rect x="14" y="11" width="2" height="2"/><rect x="13" y="14" width="2" height="2"/></g>
<circle cx="4.5" cy="13.5" r="2.3" fill="#FF0000"/><circle cx="10.8" cy="13" r="2.5" fill="#FF0000"/></svg>
<div class="rz" style="left:489px;top:574px;width:16px;height:11px"></div>
<div class="rz" style="left:489px;top:585px;width:16px;height:11px"></div>
<svg style="position:absolute;left:489px;top:574px" width="16" height="22" viewBox="0 0 16 22" ><path d="M6 6h5l-2.5-2.5z M6 16h5l-2.5 2.5z" fill="#000"/></svg>
<div style="left:511px;top:576px;width:2px;height:20px;background:#fff"></div>
<div style="left:513px;top:576px;width:1px;height:20px;background:#808080"></div>
<div style="left:522px;top:578px;width:13px;height:16px;background:#0A246A"></div>
<div class="t" style="left:522px;top:580px;color:#fff;letter-spacing:-0.5px">DE</div>
<div style="left:538px;top:574px;width:261px;height:22px;box-shadow:inset 1px 1px #808080,inset -1px -1px #fff"></div>
<div class="t" style="left:762px;top:579px;letter-spacing:0">09:54</div></body></html>
